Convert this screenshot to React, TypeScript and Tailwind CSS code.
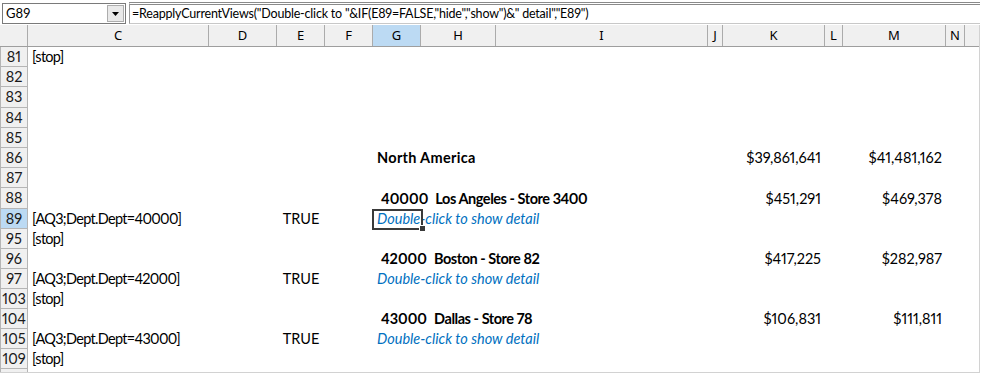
import type { ReactNode } from "react";

const cellFont = { fontFamily: "Lato, 'Liberation Sans', sans-serif" };

type RowProps = {
  n: number;
  c?: ReactNode;
  e?: ReactNode;
  g?: ReactNode;
  k?: ReactNode;
  m?: ReactNode;
  tall?: boolean;
  active?: boolean;
  selected?: boolean;
};

function Row({ n, c, e, g, k, m, tall, active, selected }: RowProps) {
  return (
    <div className={tall ? "flex h-[21px] items-stretch" : "flex h-[20px] items-stretch"}>
      <div
        className={
          active
            ? "w-[28px] shrink-0 border-l border-b border-r border-[#b5b5b5] bg-[#bcdaf3] flex items-center justify-center text-[14.5px] text-[#1a1a1a]"
            : "w-[28px] shrink-0 border-l border-b border-r border-[#b5b5b5] bg-[#f0f0f0] flex items-center justify-center text-[14.5px] text-[#1a1a1a]"
        }
      >
        {n}
      </div>
      <div className="w-[181px] shrink-0 pl-[4px] flex items-center whitespace-nowrap text-[14.5px] tracking-[-0.7px]">{c}</div>
      <div className="w-[68px] shrink-0" />
      <div className="w-[48px] shrink-0 flex items-center justify-center whitespace-nowrap text-[14.5px]">{e}</div>
      <div className="w-[48px] shrink-0" />
      <div className="w-[48px] shrink-0 relative flex items-center pl-[4px] whitespace-nowrap text-[14.5px]">
        {g}
        {selected && (
          <>
            <div className="absolute left-[-1px] top-[0px] w-[51px] h-[21px] border-[2.5px] border-[#3a3a3a]" />
            <div className="absolute left-[46px] top-[16px] w-[7px] h-[7px] bg-[#3a3a3a] border border-white" />
          </>
        )}
      </div>
      <div className="w-[75px] shrink-0" />
      <div className="w-[212px] shrink-0" />
      <div className="w-[15px] shrink-0" />
      <div className="w-[102px] shrink-0 flex items-center justify-end pr-[4px] whitespace-nowrap text-[14.5px]">{k}</div>
      <div className="w-[18px] shrink-0" />
      <div className="w-[103px] shrink-0 flex items-center justify-end pr-[4px] whitespace-nowrap text-[14.5px]">{m}</div>
      <div className="w-[19px] shrink-0" />
      <div className="flex-1" />
    </div>
  );
}

const detail = <span className="italic text-[#0070c0]">Double-click to show detail</span>;

function Store({ id, name }: { id: string; name: string }) {
  return (
    <span className="font-bold pl-[4px] whitespace-pre">
      {id}
      {"  "}
      <span className="tracking-[-0.45px]">{name}</span>
    </span>
  );
}

const headers: { k: string; w: string; on?: boolean }[] = [
  { k: "C", w: "w-[181px]" },
  { k: "D", w: "w-[68px]" },
  { k: "E", w: "w-[48px]" },
  { k: "F", w: "w-[48px]" },
  { k: "G", w: "w-[48px]", on: true },
  { k: "H", w: "w-[75px]" },
  { k: "I", w: "w-[212px]" },
  { k: "J", w: "w-[15px]" },
  { k: "K", w: "w-[102px]" },
  { k: "L", w: "w-[18px]" },
  { k: "M", w: "w-[103px]" },
  { k: "N", w: "w-[19px]" },
];

export default function App() {
  return (
    <div className="w-[983px] h-[375px] bg-white overflow-hidden text-black proportional-nums" style={cellFont}>
      {/* name box + formula bar */}
      <div className="flex h-[25px] items-start pt-[2px] pl-[2px] w-[980px]">
        <div className="w-[124px] h-[21px] mt-[1px] border border-[#7a7a7a] bg-white flex items-stretch">
          <div className="flex-1 flex items-center pl-[3px] text-[13px]">G89</div>
          <div className="w-[17px] my-[1px] mr-[1px] bg-[#e9e9e9] border border-[#adadad] flex items-center justify-center">
            <svg width="7" height="4" viewBox="0 0 7 4">
              <path d="M0 0 L7 0 L3.5 4 Z" fill="#000" />
            </svg>
          </div>
        </div>
        <div className="flex-1 ml-[3px] h-[22px] border-t-[3px] border-double border-t-[#8a8a8a] border-l border-l-[#9a9a9a] border-b border-b-[#c8c8c8] bg-white flex items-center pl-[2px]">
          <span className="text-[12.5px] whitespace-nowrap leading-none tracking-[-0.2px]">
            =ReapplyCurrentViews("Double-click to "&amp;IF(E89=FALSE,"hide","show")&amp;" detail","E89")
          </span>
        </div>
      </div>

      {/* sheet */}
      <div className="w-[980px] border-r border-b border-[#d2d2d2]">
        <div
          className="flex h-[22px] bg-[#f0f0f0] border-b border-[#9e9e9e] text-[13px]"
          style={{ fontFamily: "'Noto Sans', 'DejaVu Sans', sans-serif" }}
        >
          <div className="w-[28px] shrink-0 border-r border-[#ababab]" />
          {headers.map((h) => (
            <div
              key={h.k}
              className={
                h.on
                  ? `${h.w} shrink-0 border-r border-[#ababab] bg-[#bcdaf3] flex items-center justify-center`
                  : `${h.w} shrink-0 border-r border-[#ababab] flex items-center justify-center`
              }
            >
              {h.k}
            </div>
          ))}
          <div className="flex-1" />
        </div>

        <Row n={81} c="[stop]" />
        <Row n={82} />
        <Row n={83} tall />
        <Row n={84} />
        <Row n={85} />
        <Row n={86} g={<span className="font-bold tracking-[0.3px]">North America</span>} k="$39,861,641" m="$41,481,162" />
        <Row n={87} />
        <Row n={88} tall g={<Store id="40000" name="Los Angeles - Store 3400" />} k="$451,291" m="$469,378" />
        <Row n={89} active selected c="[AQ3;Dept.Dept=40000]" e="TRUE" g={detail} />
        <Row n={95} c="[stop]" />
        <Row n={96} g={<Store id="42000" name="Boston - Store 82" />} k="$417,225" m="$282,987" />
        <Row n={97} c="[AQ3;Dept.Dept=42000]" e="TRUE" g={detail} />
        <Row n={103} c="[stop]" />
        <Row n={104} g={<Store id="43000" name="Dallas - Store 78" />} k="$106,831" m="$111,811" />
        <Row n={105} c="[AQ3;Dept.Dept=43000]" e="TRUE" g={detail} />
        <Row n={109} c="[stop]" />
        <div className="flex h-[3px]">
          <div className="w-[28px] shrink-0 border-l border-r border-[#b5b5b5] bg-[#f0f0f0]" />
        </div>
      </div>
    </div>
  );
}
